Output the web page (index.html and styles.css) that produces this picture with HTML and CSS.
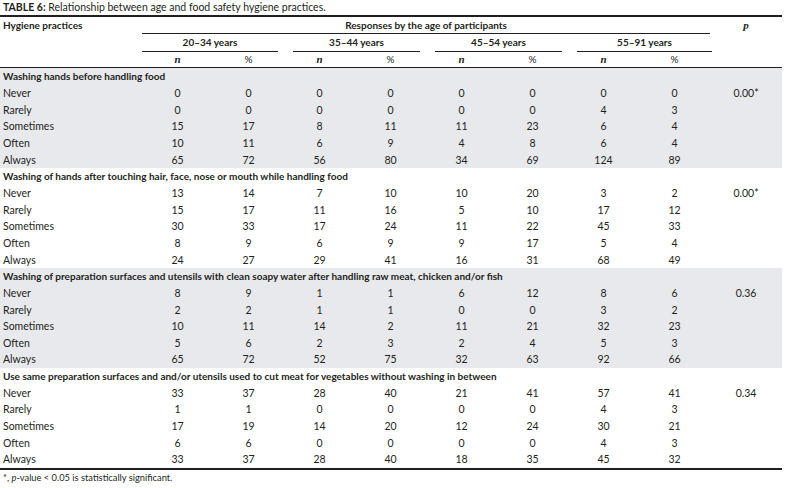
FILE: index.html
```html
<!DOCTYPE html>
<html lang="en">
<head>
<meta charset="utf-8">
<title>Table 6</title>
<link rel="stylesheet" href="styles.css">
</head>
<body>
<div class="caption"><b>TABLE 6:</b> Relationship between age and food safety hygiene practices.</div>
<table class="tbl">
  <colgroup>
    <col class="c-first">
    <col class="c-num"><col class="c-num"><col class="c-num"><col class="c-num">
    <col class="c-num"><col class="c-num"><col class="c-num"><col class="c-num">
    <col class="c-p">
  </colgroup>
  <thead>
    <tr class="h1">
      <th rowspan="3" class="hyg">Hygiene practices</th>
      <th colspan="8" class="resp"><div>Responses by the age of participants</div></th>
      <th rowspan="3" class="pcol"><i class="serif">p</i></th>
    </tr>
    <tr class="h2">
      <th colspan="2"><div>20–34 years</div></th>
      <th colspan="2"><div>35–44 years</div></th>
      <th colspan="2"><div>45–54 years</div></th>
      <th colspan="2"><div>55–91 years</div></th>
    </tr>
    <tr class="h3">
      <th><i class="serif">n</i></th><th>%</th>
      <th><i class="serif">n</i></th><th>%</th>
      <th><i class="serif">n</i></th><th>%</th>
      <th><i class="serif">n</i></th><th>%</th>
    </tr>
  </thead>
  <tbody class="shade">
    <tr class="grp"><td colspan="10">Washing hands before handling food</td></tr>
    <tr><td>Never</td><td>0</td><td>0</td><td>0</td><td>0</td><td>0</td><td>0</td><td>0</td><td>0</td><td>0.00*</td></tr>
    <tr><td>Rarely</td><td>0</td><td>0</td><td>0</td><td>0</td><td>0</td><td>0</td><td>4</td><td>3</td><td></td></tr>
    <tr><td>Sometimes</td><td>15</td><td>17</td><td>8</td><td>11</td><td>11</td><td>23</td><td>6</td><td>4</td><td></td></tr>
    <tr><td>Often</td><td>10</td><td>11</td><td>6</td><td>9</td><td>4</td><td>8</td><td>6</td><td>4</td><td></td></tr>
    <tr><td>Always</td><td>65</td><td>72</td><td>56</td><td>80</td><td>34</td><td>69</td><td>124</td><td>89</td><td></td></tr>
  </tbody>
  <tbody>
    <tr class="grp"><td colspan="10">Washing of hands after touching hair, face, nose or mouth while handling food</td></tr>
    <tr><td>Never</td><td>13</td><td>14</td><td>7</td><td>10</td><td>10</td><td>20</td><td>3</td><td>2</td><td>0.00*</td></tr>
    <tr><td>Rarely</td><td>15</td><td>17</td><td>11</td><td>16</td><td>5</td><td>10</td><td>17</td><td>12</td><td></td></tr>
    <tr><td>Sometimes</td><td>30</td><td>33</td><td>17</td><td>24</td><td>11</td><td>22</td><td>45</td><td>33</td><td></td></tr>
    <tr><td>Often</td><td>8</td><td>9</td><td>6</td><td>9</td><td>9</td><td>17</td><td>5</td><td>4</td><td></td></tr>
    <tr><td>Always</td><td>24</td><td>27</td><td>29</td><td>41</td><td>16</td><td>31</td><td>68</td><td>49</td><td></td></tr>
  </tbody>
  <tbody class="shade">
    <tr class="grp"><td colspan="10">Washing of preparation surfaces and utensils with clean soapy water after handling raw meat, chicken and/or fish</td></tr>
    <tr><td>Never</td><td>8</td><td>9</td><td>1</td><td>1</td><td>6</td><td>12</td><td>8</td><td>6</td><td>0.36</td></tr>
    <tr><td>Rarely</td><td>2</td><td>2</td><td>1</td><td>1</td><td>0</td><td>0</td><td>3</td><td>2</td><td></td></tr>
    <tr><td>Sometimes</td><td>10</td><td>11</td><td>14</td><td>2</td><td>11</td><td>21</td><td>32</td><td>23</td><td></td></tr>
    <tr><td>Often</td><td>5</td><td>6</td><td>2</td><td>3</td><td>2</td><td>4</td><td>5</td><td>3</td><td></td></tr>
    <tr><td>Always</td><td>65</td><td>72</td><td>52</td><td>75</td><td>32</td><td>63</td><td>92</td><td>66</td><td></td></tr>
  </tbody>
  <tbody>
    <tr class="grp"><td colspan="10">Use same preparation surfaces and and/or utensils used to cut meat for vegetables without washing in between</td></tr>
    <tr><td>Never</td><td>33</td><td>37</td><td>28</td><td>40</td><td>21</td><td>41</td><td>57</td><td>41</td><td>0.34</td></tr>
    <tr><td>Rarely</td><td>1</td><td>1</td><td>0</td><td>0</td><td>0</td><td>0</td><td>4</td><td>3</td><td></td></tr>
    <tr><td>Sometimes</td><td>17</td><td>19</td><td>14</td><td>20</td><td>12</td><td>24</td><td>30</td><td>21</td><td></td></tr>
    <tr><td>Often</td><td>6</td><td>6</td><td>0</td><td>0</td><td>0</td><td>0</td><td>4</td><td>3</td><td></td></tr>
    <tr><td>Always</td><td>33</td><td>37</td><td>28</td><td>40</td><td>18</td><td>35</td><td>45</td><td>32</td><td></td></tr>
  </tbody>
</table>
<div class="foot">*, <i>p</i>-value &lt; 0.05 is statistically significant.</div>
</body>
</html>
```

FILE: styles.css
```css
html, body {
  margin: 0;
  padding: 0;
  background: #ffffff;
}
body {
  font-family: "Lato", "Liberation Sans", sans-serif;
  font-size: 10.5px;
  color: #231f20;
  width: 788px;
}
.caption {
  height: 15px;
  line-height: 15px;
  padding-left: 3px;
  font-size: 10.5px;
  white-space: nowrap;
}
.caption b {
  font-weight: 700;
}
.tbl {
  width: 782px;
  table-layout: fixed;
  border-collapse: separate;
  border-spacing: 0;
  border-bottom: 2px solid #231f20;
}
.c-first { width: 142px; }
.c-num { width: 71px; }
.c-p { width: 72px; }

.tbl th {
  font-weight: 700;
  font-size: 10px;
  padding: 0;
  text-align: center;
}
.serif {
  font-family: "Liberation Serif", "DejaVu Serif", serif;
  font-weight: 700;
  font-size: 11px;
}
.h1 { height: 19px; }
.h1 th {
  border-top: 2px solid #231f20;
  vertical-align: top;
  line-height: 16px;
}
.h1 th.hyg {
  text-align: left;
  padding-left: 3px;
  border-bottom: 1px solid #231f20;
}
.h1 th.pcol {
  border-bottom: 1px solid #231f20;
}
.h1 th.resp div {
  height: 16px;
  border-bottom: 1px solid #231f20;
}
.h2 { height: 18px; }
.h2 th {
  vertical-align: top;
}
.h2 th div {
  height: 17px;
  line-height: 17px;
  border-bottom: 1px solid #231f20;
  margin: 0 6px 0 9px;
}
.h2 th:first-child div {
  margin-left: 0;
}
.h2 th:last-child div {
  margin-right: -2px;
}
.h3 { height: 16px; }
.h3 th {
  line-height: 15px;
  border-bottom: 1px solid #231f20;
  vertical-align: top;
}
.h3 th {
  font-weight: 400;
}
.tbl td {
  padding: 0;
  height: 16.67px;
  line-height: 16px;
  text-align: center;
  vertical-align: middle;
  white-space: nowrap;
}
.tbl td:first-child {
  text-align: left;
  padding-left: 3px;
}
.tbl tr.grp td {
  font-weight: 700;
  font-size: 10px;
}
.shade td {
  background: #e8e9ed;
}
.foot {
  font-size: 9.3px;
  line-height: 14px;
  padding: 1px 0 0 3px;
}
```
